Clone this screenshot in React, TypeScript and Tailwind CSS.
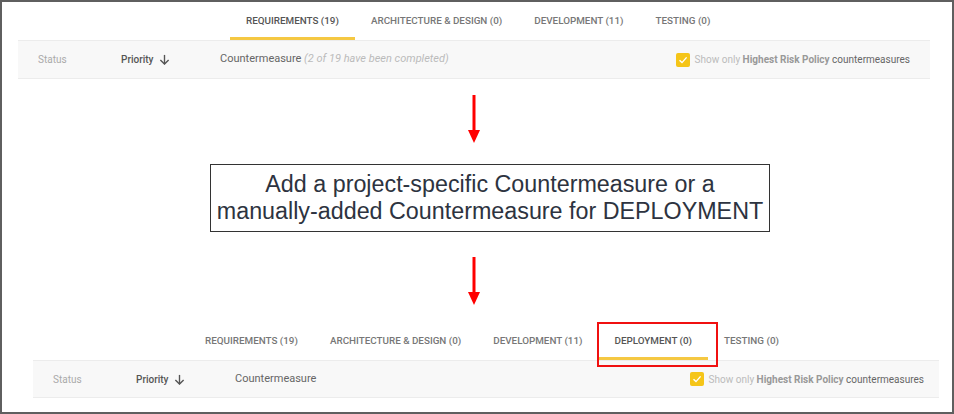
import React from "react";

const Arrow = () => (
  <svg width="14" height="48" viewBox="0 0 14 48" className="block">
    <line x1="7" y1="0" x2="7" y2="38" stroke="#ff0000" strokeWidth="3" />
    <polygon points="1,35 13,35 7,48" fill="#ff0000" />
  </svg>
);

const Check = () => (
  <span className="flex h-[14px] w-[14px] items-center justify-center rounded-[2px] bg-[#f5c518]">
    <svg width="10" height="10" viewBox="0 0 10 10">
      <polyline points="1.5,5.2 4,7.6 8.6,2.4" fill="none" stroke="#fff" strokeWidth="1.4" />
    </svg>
  </span>
);

type Tab = { label: string; active?: boolean; highlight?: boolean };

const Panel = ({
  tabs,
  completed,
  widthClass,
  mlClass,
  tabsPl,
  prClass,
  headerH,
}: {
  tabs: Tab[];
  completed: boolean;
  widthClass: string;
  mlClass: string;
  tabsPl: string;
  prClass: string;
  headerH: string;
}) => (
  <div className={`${widthClass} ${mlClass} bg-white`}>
    <div className={`flex h-[39px] items-stretch border-b border-[#ececec] ${tabsPl}`}>
      {tabs.map((t) => (
        <div key={t.label} className="relative flex items-stretch">
          <div
            className={`flex items-center px-4 text-[9.85px] font-medium ${
              t.active ? "border-b-[3px] border-[#f5c842] pt-[4px] text-[#555]" : "pt-[1px] text-[#777]"
            }`}
          >
            {t.label}
          </div>
          {t.highlight && (
            <div className="pointer-events-none absolute -left-[2px] -right-[10px] top-0 -bottom-[7px] border-2 border-[#f01010]" />
          )}
        </div>
      ))}
    </div>
    <div className={`flex ${headerH} items-center border-b border-[#ececec] bg-[#f8f8f8] pl-5 ${prClass} text-[10px]`}>
      <div className="w-[83px] text-[#aaa]">Status</div>
      <div className="flex w-[99px] items-center gap-[6px] font-medium text-[#555]">
        Priority
        <svg width="11" height="11" viewBox="0 0 12 12">
          <line x1="6" y1="1" x2="6" y2="11" stroke="#555" strokeWidth="1.5" />
          <polyline points="1.5,6.5 6,11 10.5,6.5" fill="none" stroke="#555" strokeWidth="1.5" />
        </svg>
      </div>
      <div className="flex-1 text-[11px] text-[#666]">
        Countermeasure
        {completed && <span className="italic text-[#bbb]"> (2 of 19 have been completed)</span>}
      </div>
      <div className="flex items-center gap-[5px]">
        <Check />
        <span className="text-[#bbb]">
          Show only <span className="font-bold text-[#999]">Highest Risk Policy</span>{" "}
          <span className="text-[#666]">countermeasures</span>
        </span>
      </div>
    </div>
  </div>
);

export default function App() {
  return (
    <div
      className="h-[414px] w-[954px] overflow-hidden border-[2px] border-[#5f5f5f] bg-white"
      style={{ fontFamily: "Roboto, 'Liberation Sans', sans-serif" }}
    >
      <div className="flex flex-col items-start">
        <Panel
          tabs={[
            { label: "REQUIREMENTS (19)", active: true },
            { label: "ARCHITECTURE & DESIGN (0)" },
            { label: "DEVELOPMENT (11)" },
            { label: "TESTING (0)" },
          ]}
          completed
          widthClass="w-[912px]"
          mlClass="ml-[16px]"
          tabsPl="pl-[212px]"
          prClass="pr-5"
          headerH="h-[38px]"
        />
        <div className="ml-[465px] mt-[16px]">
          <Arrow />
        </div>
        <div
          className="ml-[208px] mt-[21px] w-[560px] border border-[#333] py-[6px] text-center text-[23.3px] leading-[27px] text-[#2d3340]"
          style={{ fontFamily: "'Liberation Sans', Arial, sans-serif" }}
        >
          Add a project-specific Countermeasure or a
          <br />
          manually-added Countermeasure for DEPLOYMENT
        </div>
        <div className="ml-[465px] mt-[25px]">
          <Arrow />
        </div>
        <div className="mt-[17px]">
          <Panel
            tabs={[
              { label: "REQUIREMENTS (19)" },
              { label: "ARCHITECTURE & DESIGN (0)" },
              { label: "DEVELOPMENT (11)" },
              { label: "DEPLOYMENT (0)", active: true, highlight: true },
              { label: "TESTING (0)" },
            ]}
            completed={false}
            widthClass="w-[906px]"
            mlClass="ml-[31px]"
            tabsPl="pl-[156px]"
            prClass="pr-[15px]"
            headerH="h-[37px]"
          />
        </div>
      </div>
    </div>
  );
}
